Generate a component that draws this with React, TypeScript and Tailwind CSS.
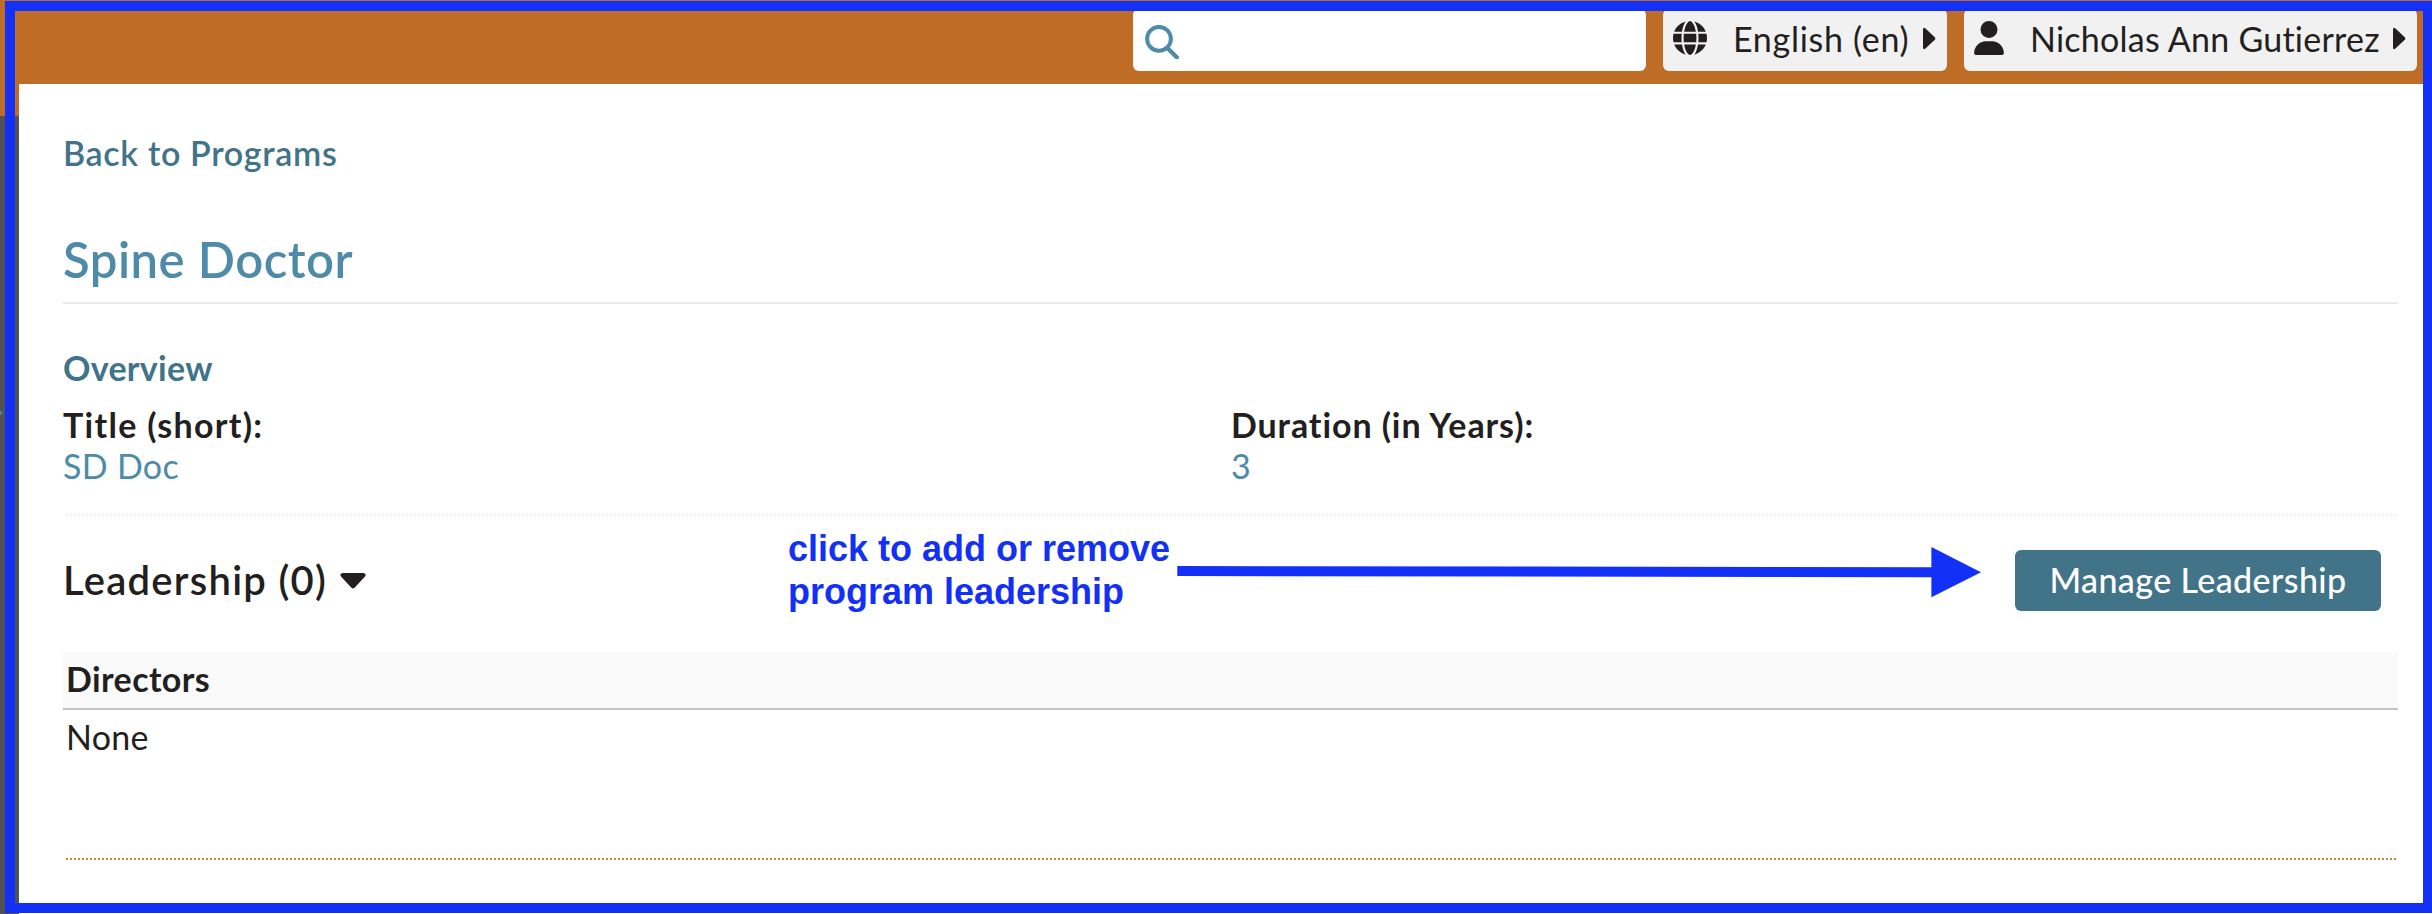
import { FaGlobe, FaUser } from "react-icons/fa6";

function CaretRight() {
  return (
    <svg className="mt-[9px] h-[23px] w-[14px] shrink-0" viewBox="0 0 14 23" fill="currentColor" aria-hidden="true">
      <path d="M1 2.6 Q1 0 3.2 1.2 L13 10.4 Q13.8 11.5 13 12.6 L3.2 21.8 Q1 23 1 20.4 Z" />
    </svg>
  );
}

function TopBar() {
  return (
    <header className="flex h-[84px] items-start bg-[#bf6c26] pt-[9px] pr-[15px] text-[34px] leading-[40px] text-[#231f20]">
      <div className="ml-auto flex h-[62px] w-[513px] items-start rounded-md bg-white pt-4 pl-3">
        <svg width="34" height="34" viewBox="0 0 34 34" fill="none" stroke="#4e8ba8" aria-label="Search">
          <circle cx="14" cy="13.8" r="11.9" strokeWidth="4" />
          <path d="M22.6 23.2 L31.7 32.2" strokeWidth="4.4" strokeLinecap="round" />
        </svg>
      </div>
      <button className="ml-[17px] flex h-[62px] w-[284px] items-start rounded-md bg-[#f1f1f1] pt-[9px] pl-[10px]">
        <FaGlobe className="mt-[3px] size-[34px] shrink-0" />
        <span className="mt-px ml-[26px] w-[189px] shrink-0 text-left tracking-[0.7px] whitespace-nowrap">
          English (en)
        </span>
        <CaretRight />
      </button>
      <button className="ml-[17px] flex h-[62px] w-[453px] items-start rounded-md bg-[#f1f1f1] pt-[9px] pl-[10px]">
        <FaUser className="mt-[3px] h-[34px] w-[30px] shrink-0" />
        <span className="mt-px ml-[26px] w-[362px] shrink-0 text-left tracking-[0.25px] whitespace-nowrap">
          Nicholas Ann Gutierrez
        </span>
        <CaretRight />
      </button>
    </header>
  );
}

function DottedRule({ color }: { color: string }) {
  return (
    <svg className="mx-[3px] block h-[2px] w-[2330px]" aria-hidden="true">
      <line x1="0" y1="1" x2="2330" y2="1" stroke={color} strokeWidth="2" strokeDasharray="2 2" />
    </svg>
  );
}

function Annotation() {
  return (
    <>
      <p className="absolute top-[527px] left-[788px] font-['Liberation_Sans',sans-serif] text-[36px] leading-[43px] font-bold whitespace-nowrap text-[#1330f6]">
        click to add or remove
        <br />
        program leadership
      </p>
      <svg className="absolute top-[540px] left-[1170px]" width="820" height="64" viewBox="1170 540 820 64" fill="#1330f6">
        <path d="M1177.3 566 L1932 567.2 V577.2 L1177.3 576 Z" />
        <path d="M1931.4 547 L1981 572.2 L1931.4 597.3 Z" />
      </svg>
      <div className="absolute top-px left-[5px] h-[912px] w-[2428px] border-10 border-[#1330f6]" />
    </>
  );
}

export default function App() {
  return (
    <div className="relative flex h-[914px] w-[2432px] overflow-hidden bg-white font-['Lato',sans-serif]">
      <aside className="w-[19px] shrink-0 bg-[#525252]">
        <div className="h-[116px] bg-[#bf6c26]" />
        <div className="mt-[295px] h-[4px] w-[2px] rounded-r-full bg-[#4e8ba8]" />
      </aside>
      <div className="flex w-[2413px] flex-col">
        <TopBar />
        <main className="pt-[49px] pr-[34px] pl-11 text-[34px] leading-[40px] text-[#231f20]">
          <a className="block font-semibold tracking-[0.67px] text-[#417389]">Back to Programs</a>
          <h1 className="mt-14 h-[75px] border-b-2 border-[#e6eaea] text-[49px] leading-[60px] font-semibold tracking-[0.5px] text-[#4e8ba8]">
            Spine Doctor
          </h1>
          <h2 className="mt-[44px] font-bold tracking-[0.28px] text-[#417389]">Overview</h2>
          <dl className="mt-[17px] grid grid-cols-[1168px_1fr]">
            <div>
              <dt className="font-bold tracking-[1.3px]">Title (short):</dt>
              <dd className="mt-px tracking-[0.3px] text-[#4e8ba8]">SD Doc</dd>
            </div>
            <div>
              <dt className="font-bold tracking-[0.9px]">Duration (in Years):</dt>
              <dd className="mt-px text-[#4e8ba8]">3</dd>
            </div>
          </dl>
          <div className="mt-[28px]">
            <DottedRule color="#ececec" />
          </div>
          <div className="mt-[34px] flex h-[61px] items-start justify-between pr-[17px]">
            <h3 className="flex pt-[7px] text-[40px] leading-[46px] font-semibold tracking-[1.26px]">
              Leadership (0)
              <svg className="mt-[16px] ml-[13px] h-[16px] w-[26px]" viewBox="0 0 26 16" fill="currentColor">
                <path d="M2.6 0 H23.4 Q27 .6 25 3.6 L14.6 14.8 Q13 16.2 11.4 14.8 L1 3.6 Q-1 .6 2.6 0 Z" />
              </svg>
            </h3>
            <button className="h-[61px] w-[366px] rounded-md bg-[#417389] pb-px font-medium tracking-[0.4px] text-white">
              Manage Leadership
            </button>
          </div>
          <table className="mt-[41px] w-full border-collapse text-left">
            <thead>
              <tr>
                <th className="block h-[58px] border-b-2 border-[#bfc4c8] bg-[#fafafa] pt-[7px] pl-[3px] font-bold tracking-[0.4px]">
                  Directors
                </th>
              </tr>
            </thead>
            <tbody>
              <tr>
                <td className="block h-[148px] pt-[7px] pl-[3px] tracking-[0.3px]">None</td>
              </tr>
            </tbody>
          </table>
          <DottedRule color="#c68642" />
        </main>
      </div>
      <Annotation />
    </div>
  );
}
